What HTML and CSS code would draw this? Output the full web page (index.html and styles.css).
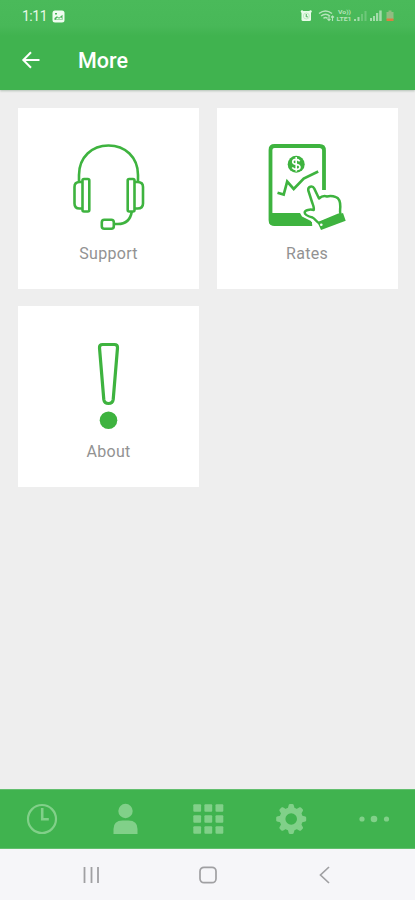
FILE: index.html
```html
<!DOCTYPE html>
<html lang="en">
<head>
<meta charset="utf-8">
<title>More</title>
<link rel="stylesheet" href="styles.css">
</head>
<body>
<div class="screen">
  <header class="top">
    <div class="status">
      <span class="time">1:11</span>
      <svg class="photo" width="13" height="13" viewBox="0 0 13 13"><rect x=".5" y=".5" width="12" height="12" rx="2.500" fill="#effcf0"/><path d="M2.500 10V8L5 6.200l2 1.500 3.500-3V10zM3 3h2v1.500H3z" fill="#48b658"/><path d="m3.500 9.500 2-2 1.500 1.300 2-1.500 1.500 2.200z" fill="#effcf0"/></svg>
      <svg class="indicators" width="100" height="18" viewBox="298 8 100 18">
        <g fill="#e9fbe9"><rect x="301.500" y="12" width="9.500" height="10" rx="1.500"/><circle cx="302" cy="12.500" r="1.200"/><circle cx="310.500" cy="12.500" r="1.200"/></g>
        <path d="M306.300 15v2.500l1.700.5" fill="none" stroke="#64bd70" stroke-width="1.200"/><circle cx="306.300" cy="17" r="3" fill="none" stroke="#b8e4bd" stroke-width=".8"/>
        <g fill="none" stroke="#b5e4ba" stroke-width="1.500"><path d="M319 14.500q6.500-5 13 0M321 17q4.500-3.500 9 0M323.500 19.300q2-1.500 4 0"/><path d="M329 17v4.500m-1.500-1.500 1.500 1.500 1.500-1.500M332.500 22v-5m-1.500 1.500 1.500-1.500 1.500 1.500" stroke-width="1.100"/></g>
        <g fill="#a5dcab"><path d="M354 20h2v2h-2zM357.500 18h2v4h-2zM370 19h2v3h-2zM373 17h2v5h-2zM376 14h2.200v8H376zM379.200 11.500h2.500V22h-2.500z"/><path d="M361 15h2v7h-2zM364.500 12h2v10h-2z" opacity=".4"/></g>
        <path d="M388.500 11.500h3V13h2v7h-7v-7h2z" fill="#91bd81"/><path d="M386.500 19.500h7V22h-7z" fill="#db7d42"/>
        <text class="volte" x="338" y="15.200" textLength="13" lengthAdjust="spacingAndGlyphs">Vo))</text><text class="volte" x="336.500" y="22.400" textLength="15" lengthAdjust="spacingAndGlyphs">LTE1</text>
      </svg>
    </div>
    <div class="appbar">
      <svg class="back" width="20" height="20" viewBox="21 50 20 20"><path d="M39.500 60H24M31 52.300 23.300 60l7.700 7.700" fill="none" stroke="#fff" stroke-width="2"/></svg>
      <h1>More</h1>
    </div>
  </header>

  <main class="tiles">
    <section class="tile">
      <svg width="100" height="100" viewBox="59 135 100 100">
        <g fill="none" stroke="#3eb33f" stroke-width="2.600" stroke-linejoin="round">
          <path d="M79 182v-7c0-18 13-29.500 29.500-29.500S138 157 138 175v7"/>
          <rect x="82.500" y="179" width="6.800" height="32.500" rx="1.500"/><path d="M82.500 182h-3q-5 0-5 5v16.500q0 5 5 5h3"/>
          <rect x="127.700" y="179" width="6.800" height="32.500" rx="1.500"/><path d="M134.500 182h3q5.500 0 5.500 5v16.500q0 5-5.500 5h-3"/>
          <path d="M131.800 211.500q-2 12.500-14 12.500h-4"/><rect x="101.800" y="219.700" width="12" height="9" rx="2.500"/>
        </g>
      </svg>
      <span>Support</span>
    </section>
    <section class="tile">
      <svg width="100" height="100" viewBox="257 135 100 100">
        <path d="M324 190v-39.500q0-4.500-4.500-4.500h-45q-4 0-4 4v70q0 4 4 4H312" fill="none" stroke="#3eb33f" stroke-width="3.800"/>
        <path d="M269 213h31l2 3.500 9 4.500 1.500 4.500H274q-5 0-5-5z" fill="#3eb33f"/>
        <circle cx="296.200" cy="164.300" r="8.500" fill="#3eb33f"/>
        <path d="M299.700 161.200q-1.500-2-3.900-1.800-3.100.2-3.100 2.500 0 1.700 3.400 2.300 3.900.7 3.900 2.900 0 2.500-3.600 2.500-2.600 0-4.200-2M296.200 157v14.600" fill="none" stroke="#fff" stroke-width="1.600"/>
        <path d="m277.500 192.700 6.200 1.900 3.500-13.100 6.500 7.500 10-10.500 14.500-7" fill="none" stroke="#3eb33f" stroke-width="2.700"/>
        <path d="M319 223c-2.500-1-3.500-4-6.500-5.500-3.500-1-8-2.500-7.800-5.200.4-2.300 5.300-3.300 9-2.300.8-2-.7-5-1.700-8l-3.700-11.500c-.8-4 4.200-5.500 6-1.900l4.700 9.900c3-2.700 6-2.700 8-2 3-.8 6.500-.3 9 .7 3.500 1.300 4.300 5.300 4.300 9.300 0 3-.8 4.500.2 7.500z" fill="#fff" stroke="#3eb33f" stroke-width="2.500" stroke-linejoin="round"/>
        <path d="m317.500 222.500 25.500-9.500 2.700 7.700-24.700 9.300z" fill="#3eb33f"/><circle cx="321.300" cy="224.800" r="1.300" fill="#fff"/>
      </svg>
      <span>Rates</span>
    </section>
    <section class="tile">
      <svg width="100" height="100" viewBox="59 333 100 100">
        <path d="M102.500 344.500h12q3.200 0 3 3.500l-4.300 51.500q-.6 4-4.700 4t-4.700-4L99.500 348q-.2-3.500 3-3.500z" fill="none" stroke="#3eb33f" stroke-width="3.200"/>
        <circle cx="108.500" cy="420.300" r="8.800" fill="#3eb33f"/>
      </svg>
      <span>About</span>
    </section>
  </main>

  <nav class="tabs">
    <svg viewBox="0 0 32 32"><circle cx="16" cy="16" r="14" fill="none" stroke="#81d089" stroke-width="2.200"/><path d="M16.200 5v11.200h6.600" fill="none" stroke="#81d089" stroke-width="2.600"/></svg>
    <svg viewBox="0 0 32 32"><g fill="#81d089"><circle cx="16.500" cy="8" r="7.200"/><path d="M4.500 31v-5q0-8.500 9-8.500h6q9 0 9 8.500v5z"/></g></svg>
    <svg viewBox="0 0 32 32"><g fill="#81d089"><rect x="1.300" y="1.300" width="7.800" height="7.500" rx="1"/><rect x="12.400" y="1.300" width="7.800" height="7.500" rx="1"/><rect x="23.500" y="1.300" width="7.800" height="7.500" rx="1"/><rect x="1.300" y="12.300" width="7.800" height="7.500" rx="1"/><rect x="12.400" y="12.300" width="7.800" height="7.500" rx="1"/><rect x="23.500" y="12.300" width="7.800" height="7.500" rx="1"/><rect x="1.300" y="23.300" width="7.800" height="7.500" rx="1"/><rect x="12.400" y="23.300" width="7.800" height="7.500" rx="1"/><rect x="23.500" y="23.300" width="7.800" height="7.500" rx="1"/></g></svg>
    <svg viewBox="0 0 32 32"><circle cx="16.200" cy="16" r="8.700" fill="none" stroke="#81d089" stroke-width="5.800"/><g fill="#81d089"><path id="tooth" d="m12.600 6 1.200-4.200q.3-.8 1.200-.8h2.400q.9 0 1.200.8l1.200 4.200z"/><use href="#tooth" transform="rotate(45 16.200 16)"/><use href="#tooth" transform="rotate(90 16.200 16)"/><use href="#tooth" transform="rotate(135 16.200 16)"/><use href="#tooth" transform="rotate(180 16.200 16)"/><use href="#tooth" transform="rotate(225 16.200 16)"/><use href="#tooth" transform="rotate(270 16.200 16)"/><use href="#tooth" transform="rotate(315 16.200 16)"/></g></svg>
    <svg viewBox="0 0 32 32"><g fill="#81d089"><circle cx="4" cy="16" r="2.600"/><circle cx="16" cy="16" r="3.300"/><circle cx="28.500" cy="16" r="2.600"/></g></svg>
  </nav>

  <footer class="system">
    <svg viewBox="0 0 20 20"><path d="M3.500 2v16M10.500 2v16M17 2v16" fill="none" stroke="#a0a0a3" stroke-width="1.800"/></svg>
    <svg viewBox="0 0 20 20"><rect x="2" y="2.300" width="16" height="15.400" rx="4" fill="none" stroke="#a0a0a3" stroke-width="1.700"/></svg>
    <svg viewBox="0 0 20 20"><path d="m14 2-8.500 8L14 18" fill="none" stroke="#a0a0a3" stroke-width="1.700"/></svg>
  </footer>
</div>
</body>
</html>
```
FILE: styles.css
```css
* { box-sizing: border-box; }
body {
  margin: 0;
  font-family: Roboto, "Liberation Sans", sans-serif;
}
.screen {
  width: 415px;
  height: 900px;
  display: flex;
  flex-direction: column;
  overflow: hidden;
  background: #eeeeee;
}
.top {
  height: 90px;
  flex: none;
  color: #fff;
  background: linear-gradient(#4aba5a, #48b858 26px, #40b34f 36px, #40b34f);
  box-shadow: 0 1px 2px rgba(70, 110, 75, .35);
}
.status {
  height: 32px;
  padding: 0 17px 0 22px;
  display: flex;
  align-items: center;
}
.time {
  font-size: 14px;
  color: #e6f9e7;
  width: 30px;
  letter-spacing: -.5px;
}
.indicators { margin-left: auto; }
.volte {
  font-size: 5.8px;
  font-weight: 700;
  fill: #b5e4ba;
}
.appbar {
  height: 58px;
  padding: 0 21px;
  display: flex;
  align-items: center;
  gap: 37px;
}
.back { margin-bottom: 2px; }
h1 {
  margin: 0;
  font-size: 21.5px;
  font-weight: 500;
  line-height: 60px;
}
.tiles {
  flex: 1;
  padding: 18px;
  display: grid;
  grid-template-columns: 181px 181px;
  grid-auto-rows: 181px;
  align-content: start;
  gap: 17.4px 17.6px;
}
.tile {
  padding-top: 27px;
  display: flex;
  flex-direction: column;
  align-items: center;
  background: #fff;
}
.tile svg { flex: none; }
.tile span {
  margin-top: 9px;
  font-size: 16px;
  line-height: 20px;
  letter-spacing: .3px;
  color: #929292;
}
.tabs {
  height: 60px;
  flex: none;
  display: grid;
  grid-template-columns: repeat(5, 1fr);
  place-items: center;
  background: #40b34f;
  border-top: 1px solid #62bf6e;
  border-bottom: 1px solid #62bf6e;
}
.tabs svg { width: 32px; height: 32px; }
.system {
  height: 51px;
  flex: none;
  padding: 0 32px 0 33px;
  display: grid;
  grid-template-columns: repeat(3, 1fr);
  place-items: center;
  background: #f6f6f9;
}
.system svg { width: 20px; height: 20px; }
```
